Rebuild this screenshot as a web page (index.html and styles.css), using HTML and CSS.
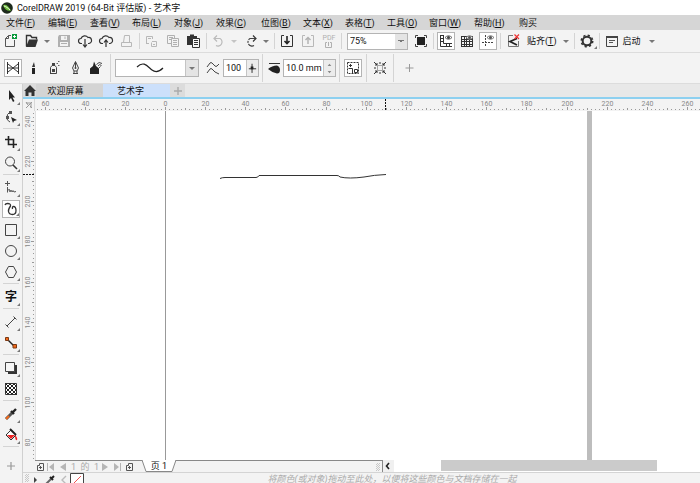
FILE: index.html
```html
<!DOCTYPE html>
<html lang="zh-CN">

<head>
    <meta charset="UTF-8">
    <meta name="viewport" content="width=device-width, initial-scale=1.0">
    <title>CorelDRAW 2019 (64-Bit 评估版) - 艺术字</title>
    <link rel="stylesheet" href="styles.css">
</head>

<body>
    <header class="titlebar">
        <svg class="logo" viewBox="0 0 12 12">
            <circle cx="6" cy="6" r="5.8" fill="#1d2a1c" />
            <path d="M2 3.5C4 1.5 7 3 10 8.5C7 9.5 4 8 2 3.5Z" fill="#6fbf3c" />
            <path d="M3 4C5 4.5 7 6 9 8" stroke="#e8f6df" fill="none" />
        </svg>
        <span>CorelDRAW 2019 (64-Bit 评估版) - 艺术字</span>
    </header>

    <nav class="menubar">
        <a href="#">文件(<u>F</u>)</a>
        <a href="#">编辑(<u>E</u>)</a>
        <a href="#">查看(<u>V</u>)</a>
        <a href="#">布局(<u>L</u>)</a>
        <a href="#">对象(<u>J</u>)</a>
        <a href="#" class="wide">效果(<u>C</u>)</a>
        <a href="#">位图(<u>B</u>)</a>
        <a href="#">文本(<u>X</u>)</a>
        <a href="#">表格(<u>T</u>)</a>
        <a href="#">工具(<u>O</u>)</a>
        <a href="#" class="wide">窗口(<u>W</u>)</a>
        <a href="#" class="wide">帮助(<u>H</u>)</a>
        <a href="#">购买</a>
    </nav>

    <!-- standard toolbar -->
    <div class="toolbar">
        <button class="tool" aria-label="新建"><svg viewBox="0 0 16 16">
            <path d="M8 2.5H5.5L2.5 5.5V13.5H11.5V7" fill="none" stroke="#555" />
            <path d="M2.5 5.5H5.5V2.5" fill="none" stroke="#555" />
            <path d="M9 1H14V6H9Z" fill="#0a9a3c" />
            <path d="M11.5 2V5M10 3.5H13" stroke="#fff" />
        </svg></button>
        <button class="tool" aria-label="打开"><svg viewBox="0 0 16 16">
            <path d="M2.5 13.5V2.5H6.5L8 4.5H12.5V6.5" fill="none" stroke="#333" stroke-width="1.4" />
            <path d="M2 14L5 6.5H14L11.5 14Z" fill="#333" />
        </svg></button>
        <button class="drop" aria-label="最近的文件"></button>
        <button class="tool off" aria-label="保存"><svg viewBox="0 0 16 16">
            <path d="M3 2H14V14H2V4Z" fill="#b0b0b0" />
            <path d="M5 3H11V7H5ZM4 9H12V13H4Z" fill="#f3f3f3" />
            <path d="M9 3.5V6M5 10.5H11" stroke="#b0b0b0" />
        </svg></button>
        <button class="tool" aria-label="从云端打开"><svg viewBox="0 0 16 16">
            <path d="M5 10.5H4A2.5 2.5 0 0 1 4 5.5A4 4 0 0 1 11 4.5A3 3 0 0 1 12 10.5H11" fill="none" stroke="#333" stroke-width="1.2" />
            <path d="M8 6V13M6 11.5L8 14L10 11.5" fill="none" stroke="#333" stroke-width="1.2" />
        </svg></button>
        <button class="tool" aria-label="保存到云端"><svg viewBox="0 0 16 16">
            <path d="M5 10.5H4A2.5 2.5 0 0 1 4 5.5A4 4 0 0 1 11 4.5A3 3 0 0 1 12 10.5H11" fill="none" stroke="#333" stroke-width="1.2" />
            <path d="M8 14V7M6 9.5L8 7L10 9.5" fill="none" stroke="#333" stroke-width="1.2" />
        </svg></button>
        <button class="tool" aria-label="打印"><svg viewBox="0 0 16 16">
            <path d="M4.5 9.5L5.5 2.5H10.5V9.5M2.5 9.5H12.5V13.5H2.5Z" fill="none" stroke="#b8b8b8" />
        </svg></button>
        <span class="sep"></span>
        <button class="tool" aria-label="剪切"><svg viewBox="0 0 16 16">
            <path d="M2.5 11V3.5H8.5V6M2.5 10.5H5M7.5 9.5V13.5H12.5V8.5H8" fill="none" stroke="#b8b8b8" />
            <path d="M4 5.5H7M9 11.5H11" stroke="#b8b8b8" />
        </svg></button>
        <button class="tool" aria-label="复制"><svg viewBox="0 0 16 16">
            <path d="M6 10.5H2.5V2.5H9.5V5M6.5 5.5H13.5V13.5H6.5Z" fill="none" stroke="#b0b0b0" />
            <path d="M4 4.5H8M4 6.5H6M8 7.5H12M8 9.5H12M8 11.5H12" stroke="#b0b0b0" />
        </svg></button>
        <button class="tool" aria-label="粘贴"><svg viewBox="0 0 16 16">
            <path d="M1 3H4V1.5H8V3H11V12H1Z" fill="#333" />
            <path d="M6.5 5.5H13.5V14.5H6.5Z" fill="#f8f8f8" stroke="#333" />
            <path d="M8 7.5H12M8 9.5H12M8 11.5H12" stroke="#333" />
        </svg></button>
        <span class="sep"></span>
        <button class="tool" aria-label="撤消"><svg viewBox="0 0 16 16">
            <path d="M3 5.5H9A4 4 0 1 1 5 12.5" fill="none" stroke="#bbb" stroke-width="1.2" />
            <path d="M6 2.5L3 5.5L6 8.5" fill="none" stroke="#bbb" stroke-width="1.2" />
        </svg></button>
        <button class="drop off" aria-label="撤消列表"></button>
        <button class="tool" aria-label="重做"><svg viewBox="0 0 16 16">
            <path d="M13 5.5H7A4 4 0 1 0 11 12.5" fill="none" stroke="#444" stroke-width="1.2" stroke-dasharray="8 1 2 1" />
            <path d="M10 2.5L13 5.5L10 8.5" fill="none" stroke="#333" stroke-width="1.2" />
        </svg></button>
        <button class="drop" aria-label="重做列表"></button>
        <span class="sep"></span>
        <button class="tool" aria-label="导入"><svg viewBox="0 0 16 16">
            <path d="M5 2.5H2.5V13.5H13.5V2.5H11" fill="none" stroke="#333" />
            <path d="M8 3V10M5.5 8L8 10.5L10.5 8" fill="none" stroke="#222" stroke-width="1.6" />
        </svg></button>
        <button class="tool" aria-label="导出"><svg viewBox="0 0 16 16">
            <path d="M5 2.5H2.5V13.5H13.5V2.5H11" fill="none" stroke="#b8b8b8" />
            <path d="M8 11V5M5.5 7L8 4.5L10.5 7" fill="none" stroke="#b0b0b0" stroke-width="1.4" />
        </svg></button>
        <button class="tool pdf" aria-label="发布为 PDF"><span>PDF</span><svg viewBox="0 0 8 6">
            <path d="M2 .5H.5V5.5H6.5V.5H5M3.5 0V4" fill="none" stroke="#b0b0b0" />
        </svg></button>
        <span class="sep"></span>
        <select class="zoom" aria-label="缩放级别">
            <option>75%</option>
            <option>100%</option>
            <option>200%</option>
        </select>
        <button class="tool" aria-label="全屏预览"><svg viewBox="0 0 16 16">
            <path d="M4 4H12V12H4Z" fill="#222" />
            <path d="M2.5 5V2.5H5M11 2.5H13.5V5M13.5 11V13.5H11M5 13.5H2.5V11" fill="none" stroke="#444" />
        </svg></button>
        <span class="sep"></span>
        <button class="tool toggled" aria-label="显示标尺"><svg viewBox="0 0 16 16">
            <path d="M2.5 2V13.5H14M5.5 2V10.5H14M2.5 2.5H5.5M3 5.5H5M3 8.5H5M8.5 11V13M11.5 11V13" fill="none" stroke="#333" />
            <path d="M7 4.5Q10.5 1 14 4.5Q10.5 8 7 4.5Z" fill="none" stroke="#666" />
            <circle cx="10.5" cy="4.5" r="1.5" fill="#444" />
        </svg></button>
        <button class="tool" aria-label="显示网格"><svg viewBox="0 0 16 16">
            <path d="M2 3.5H14M2 6.5H14M2 8.5H14M2 11.5H14M2 13.5H14M2.5 3V14M5.5 3V14M7.5 3V14M10.5 3V14M13.5 3V14" stroke="#333" />
            <path d="M7 4.5Q10.5 1 14 4.5Q10.5 8 7 4.5Z" fill="#eee" stroke="#777" />
            <circle cx="10.5" cy="4.5" r="1.5" fill="#555" />
        </svg></button>
        <button class="tool toggled" aria-label="显示辅助线"><svg viewBox="0 0 16 16">
            <path d="M5.5 2V14" stroke="#444" stroke-dasharray="2 1" />
            <path d="M2 9.5H14" stroke="#444" stroke-dasharray="2 1" />
            <path d="M7 4.5Q10.5 1 14 4.5Q10.5 8 7 4.5Z" fill="none" stroke="#777" />
            <circle cx="10.5" cy="4.5" r="1.5" fill="#555" />
        </svg></button>
        <span class="sep"></span>
        <button class="tool" aria-label="关闭贴齐"><svg viewBox="0 0 16 16">
            <path d="M8 2.5H3.5V13.5H13.5V8" fill="none" stroke="#777" />
            <path d="M12 5.5L5 8.5L12 12" fill="none" stroke="#222" stroke-width="1.8" />
            <path d="M9.5 1.5L14 6M14 1.5L9.5 6" stroke="#e33" stroke-width="1.2" />
        </svg></button>
        <button class="text-button snap">贴齐(<u>T</u>)</button>
        <button class="drop" aria-label="贴齐选项"></button>
        <span class="sep"></span>
        <button class="tool fly" aria-label="选项"><svg viewBox="0 0 16 16">
            <circle cx="8" cy="8" r="4.3" fill="none" stroke="#333" stroke-width="2" />
            <circle cx="8" cy="8" r="5.7" fill="none" stroke="#333" stroke-width="1.6" stroke-dasharray="2.2 2.277" />
        </svg></button>
        <span class="sep"></span>
        <button class="tool" aria-label="应用程序启动器"><svg viewBox="0 0 16 16">
            <path d="M2.5 3.5H13.5V13.5H2.5Z" fill="none" stroke="#444" />
            <path d="M2 3H14V5H2Z" fill="#444" />
            <path d="M5 7.5H11M5 9.5H9" stroke="#555" />
        </svg></button>
        <button class="text-button">启动</button>
        <button class="drop launch" aria-label="启动选项"></button>
    </div>

    <!-- property bar -->
    <div class="propbar">
        <button class="tool toggled" aria-label="预设"><svg viewBox="0 0 16 16">
            <path d="M2.5 2V14M13.5 2V14M3 4L13 12M3 12L13 4M3 8H13" fill="none" stroke="#333" />
        </svg></button>
        <button class="tool" aria-label="笔刷"><svg viewBox="0 0 16 16">
            <path d="M6 8H9V14H6Z" fill="#222" />
            <path d="M6 7L8 2L9 7Z" fill="#333" />
        </svg></button>
        <button class="tool" aria-label="喷涂"><svg viewBox="0 0 16 16">
            <path d="M3.5 14V7.5L5 5.5H8L9.500 7.5V13.5H3.5" fill="none" stroke="#444" />
            <path d="M5 3H8V5H5ZM5 9H8V12H5Z" fill="#444" />
            <path d="M9.5 3.5H11M11 1.5H12.5M11 5.5H12.5" stroke="#666" />
        </svg></button>
        <button class="tool" aria-label="书法"><svg viewBox="0 0 16 16">
            <path d="M7.5 1.5L4.500 8L6 11H9L10.500 8ZM7.5 2V8M5 13.5H10M6 11V13M9 11V13" fill="none" stroke="#444" />
            <circle cx="7.5" cy="8" r="1" fill="#444" />
        </svg></button>
        <button class="tool" aria-label="表达式"><svg viewBox="0 0 16 16">
            <path d="M1 14V8.5L4 6L5 1.5L7 6L10 8.5V14Z" fill="#222" />
            <path d="M7.500 4.5Q10 1 13 3.500M9 6Q10.500 3.500 12.500 5.500M10 8L11.500 6.500" fill="none" stroke="#444" />
        </svg></button>
        <span class="sep"></span>
        <div class="combo">
            <svg class="wave" viewBox="0 0 32 12">
                <path d="M3 5C10-2 14 5 18 8S26 9 29 6" fill="none" stroke="#222" stroke-width="1.2" />
            </svg>
            <button class="drop" aria-label="预设笔触"></button>
        </div>
        <label class="tool smooth" for="smooth" aria-label="手绘平滑"><svg viewBox="0 0 16 16">
            <path d="M2 7L5 3Q6 2 7 3L10 6Q11 7 12 6L14 4M2 13L5 9Q6 8 7 9L10 12L14 14" fill="none" stroke="#444" />
        </svg></label>
        <div class="field">
            <input id="smooth" class="short" type="text" value="100">
            <button class="slider" aria-label="滑块"><svg viewBox="0 0 12 16">
                <path d="M5.5 3V13M2 8.5H10" stroke="#222" />
                <path d="M4 6H7V9H4Z" fill="#222" />
            </svg></button>
        </div>
        <span class="sep"></span>
        <label class="tool nib" for="width" aria-label="笔触宽度"><svg viewBox="0 0 16 16">
            <path d="M3 3.5H14" stroke="#333" />
            <path d="M2 9Q6 5.5 11 5.5Q14 6.5 14 10Q14 13.5 11 13.5Q6 12.5 2 9Z" fill="#222" />
        </svg></label>
        <div class="field">
            <input id="width" class="long" type="text" value="10.0 mm">
            <button class="spin" aria-label="调整宽度"><svg viewBox="0 0 12 16">
                <path d="M4 5.5L6 3L8 5.5ZM4 11L6 13.5L8 11Z" fill="#888" />
            </svg></button>
        </div>
        <span class="sep"></span>
        <button class="tool toggled" aria-label="随对象一起缩放笔触"><svg viewBox="0 0 16 16">
            <path d="M2.5 2.5H13.5V13.5H2.5Z" fill="none" stroke="#333" stroke-dasharray="2 1" />
            <path d="M3.5 8.5H7.5V13M9.5 9.5H12.5V12.5H9.5ZM4 5.5H7M5.5 4V7" fill="none" stroke="#333" />
        </svg></button>
        <span class="sep"></span>
        <button class="tool" aria-label="边框"><svg viewBox="0 0 16 16">
            <path d="M5.5 5.5H10.5V10.5H5.5Z" fill="none" stroke="#555" stroke-dasharray="1 1" />
            <path d="M2 2L5 5M14 2L11 5M2 14L5 11M14 14L11 11M8 2V4M8 12V14M2 8H4M12 8H14M3 5H5V3M11 3V5H13M3 11H5V13M11 13V11H13" fill="none" stroke="#333" />
        </svg></button>
        <span class="sep"></span>
        <button class="tool add" aria-label="快速自定义"><svg viewBox="0 0 16 16">
            <path d="M7.5 4V12M3.5 8H11.5" stroke="#999" />
        </svg></button>
    </div>

    <div class="main">
        <aside class="toolbox">
            <button class="tool fly" aria-label="选择"><svg viewBox="0 0 16 16">
                <path d="M6 2V12L8 10L10 14L11.5 13L9.5 9.5H12Z" fill="#222" />
            </svg></button>
            <button class="tool fly" aria-label="形状"><svg viewBox="0 0 16 16">
                <path d="M8 2Q3 5 4 10Q5 12 7 13" fill="none" stroke="#444" />
                <path d="M6 2H9V5H6ZM3 7H6V10H3Z" fill="#555" />
                <path d="M8 8L14 11L11 12L10 14Z" fill="#222" />
            </svg></button>
            <hr>
            <button class="tool fly" aria-label="裁剪"><svg viewBox="0 0 16 16">
                <path d="M5.5 2V10.5H14M2 5.5H10.5V14" fill="none" stroke="#222" stroke-width="1.6" />
            </svg></button>
            <button class="tool fly" aria-label="缩放"><svg viewBox="0 0 16 16">
                <circle cx="7" cy="6.5" r="4.5" fill="none" stroke="#444" />
                <path d="M10 10L14 14" stroke="#333" stroke-width="1.6" />
            </svg></button>
            <hr>
            <button class="tool fly" aria-label="手绘"><svg viewBox="0 0 16 16">
                <path d="M4.5 1V6M2 3.5H7M4.5 7V12.5M5 10Q7 8 7 12Q8 8 9 12Q10 9 11 12L13 11.5" fill="none" stroke="#555" />
            </svg></button>
            <button class="tool fly toggled" aria-label="艺术笔"><svg viewBox="0 0 16 16">
                <path d="M2 4Q2.500 2.500 4.500 2.500Q8 2.500 7.500 5Q5 8.500 5.500 10.500Q6 13.500 9.500 13.500Q13 13.500 13 9.500Q13 5.500 10.500 5.500Q9 5.500 9.500 8" fill="none" stroke="#333" stroke-width="1.3" />
            </svg></button>
            <button class="tool fly" aria-label="矩形"><svg viewBox="0 0 16 16">
                <path d="M2.5 2.5H13.5V13.5H2.5Z" fill="none" stroke="#444" />
            </svg></button>
            <button class="tool fly" aria-label="椭圆形"><svg viewBox="0 0 16 16">
                <circle cx="8" cy="8" r="5.5" fill="none" stroke="#444" />
            </svg></button>
            <button class="tool fly" aria-label="多边形"><svg viewBox="0 0 16 16">
                <path d="M5.5 2.5H10.5L13.5 8L10.5 13.5H5.5L2.5 8Z" fill="none" stroke="#444" />
            </svg></button>
            <hr>
            <button class="tool fly glyph">字</button>
            <hr>
            <button class="tool fly" aria-label="平行度量"><svg viewBox="0 0 16 16">
                <path d="M4 12L12 4M2.5 10.5L5.5 13.5M10.5 2.5L13.5 5.5" stroke="#444" />
            </svg></button>
            <button class="tool fly" aria-label="连接器"><svg viewBox="0 0 16 16">
                <path d="M4 4L12 12" stroke="#222" stroke-width="1.4" />
                <path d="M2.5 2.5H5.5V5.5H2.5ZM10 9.5H13.5V13H10Z" fill="#f26a1b" stroke="#7a3a16" />
            </svg></button>
            <hr>
            <button class="tool fly" aria-label="阴影"><svg viewBox="0 0 16 16">
                <path d="M5 5H14V14H5Z" fill="#333" />
                <path d="M2.5 2.5H11.5V11.5H2.5Z" fill="#f6f6f6" stroke="#444" />
            </svg></button>
            <button class="tool" aria-label="透明度"><svg viewBox="0 0 16 16">
                <path d="M2 2H14V14H2Z" fill="#fff" />
                <path d="M2 3H14M2 7H14M2 11H14" stroke="#222" stroke-width="2" stroke-dasharray="2 2" />
                <path d="M4 5H14M4 9H14M4 13H14" stroke="#222" stroke-width="2" stroke-dasharray="2 2" />
                <path d="M2.5 2.5H13.5V13.5H2.5Z" fill="none" stroke="#333" />
            </svg></button>
            <hr>
            <button class="tool fly" aria-label="颜色滴管"><svg viewBox="0 0 16 16">
                <path d="M3 13L9 7" stroke="#555" stroke-width="3" />
                <path d="M3 13L6 10" stroke="#f26a1b" stroke-width="2" />
                <path d="M8 5L11 8M9 7L13 3" stroke="#222" stroke-width="2.4" />
            </svg></button>
            <button class="tool fly" aria-label="交互式填充"><svg viewBox="0 0 16 16">
                <path d="M3 8L8 3L13 8L8 13Z" fill="#fff" stroke="#333" />
                <path d="M7 2L13 8" stroke="#222" stroke-width="2" />
                <path d="M4 8H12L8 12ZM12 8Q15 11 14 13Q12 14 12 8Z" fill="#e22" />
            </svg></button>
            <hr>
            <button class="tool add" aria-label="快速自定义"><svg viewBox="0 0 16 16">
                <path d="M8 4V12M4 8H12" stroke="#999" stroke-width="1.2" />
            </svg></button>
        </aside>

        <div class="workspace">
            <div class="tabs">
                <button class="home" aria-label="主页"><svg viewBox="0 0 12 12">
                    <path d="M6 0L12 6H10.5V11H7.5V7.5H4.5V11H1.5V6H0Z" fill="#333" />
                </svg></button>
                <button class="tab">欢迎屏幕</button>
                <button class="tab active">艺术字</button>
                <button class="newtab" aria-label="新建文档"><svg viewBox="0 0 12 12">
                    <path d="M6 2V10M2 6H10" stroke="#aaa" stroke-width="1.4" />
                </svg></button>
            </div>
            <div class="ruler-row">
                <div class="corner"><svg viewBox="0 0 12 12">
                    <path d="M3 9L9 3M3 4H8M8 4V9M3 3L5 6M9 9L7 7" fill="none" stroke="#999" />
                </svg></div>
                <svg class="ruler-h" id="rulerH"></svg>
            </div>
            <div class="view">
                <svg class="ruler-v" id="rulerV"></svg>
                <div class="canvas">
                    <div class="page">
                        <svg class="stroke" viewBox="0 0 168 8">
                            <path d="M1 5.5Q3 4.5 6 4.5H37Q39 4.5 40 2.5H118Q120 2.5 121 4Q130 6 145 4Q155 2 167 1.5" fill="none" stroke="#333" />
                        </svg>
                    </div>
                </div>
            </div>
            <div class="bottom">
                <div class="pager">
                    <button class="add-page" aria-label="在前面添加页"><svg viewBox="0 0 7 8"><path d="M2.500 .5H6.500V7.500H.5V2.500H2.500ZM3.500 3V6M2 4.500H5" fill="none" stroke="#555" /></svg></button>
                    <button aria-label="第一页"><svg viewBox="0 0 10 10"><path d="M1 1H2V9H1ZM8 1V9L3 5Z" fill="#b5b5b5" /></svg></button>
                    <button aria-label="上一页"><svg viewBox="0 0 10 10"><path d="M8 1V9L2 5Z" fill="#b5b5b5" /></svg></button>
                    <span class="count">1&nbsp; 的 &nbsp;1</span>
                    <button aria-label="下一页"><svg viewBox="0 0 10 10"><path d="M2 1V9L8 5Z" fill="#b5b5b5" /></svg></button>
                    <button aria-label="最后一页"><svg viewBox="0 0 10 10"><path d="M2 1V9L7 5ZM8 1H9V9H8Z" fill="#b5b5b5" /></svg></button>
                    <button class="add-page" aria-label="在后面添加页"><svg viewBox="0 0 7 8"><path d="M2.500 .5H6.500V7.500H.5V2.500H2.500ZM3.500 3V6M2 4.500H5" fill="none" stroke="#555" /></svg></button>
                    <button class="page-tab">
                        <svg viewBox="0 0 34 12">
                            <path d="M0 0L4 11.5H30L34 0" fill="#fff" stroke="#888" />
                        </svg>
                        <span>页 1</span>
                    </button>
                    <span class="grip"></span>
                </div>
                <div class="scroll">
                    <button aria-label="向左滚动"><svg viewBox="0 0 10 10"><path d="M6 2L3.5 5L6 8" fill="none" stroke="#222" stroke-width="1.6" /></svg></button>
                    <div class="thumb"></div>
                </div>
            </div>
            <footer class="palette">
                <span class="grip"></span>
                <button aria-label="调色板菜单"><svg viewBox="0 0 14 14"><path d="M5 4L8 7L5 10Z" fill="#444" /></svg></button>
                <button aria-label="滴管"><svg viewBox="0 0 14 14"><path d="M3 11L8 6" stroke="#666" stroke-width="2" /><path d="M7 4L10 7M8 6L11 3" stroke="#222" stroke-width="2" /></svg></button>
                <button aria-label="向左"><svg viewBox="0 0 14 14"><path d="M9 3L5 7L9 11" fill="none" stroke="#bbb" stroke-width="1.4" /></svg></button>
                <button class="swatch" aria-label="无颜色"><svg viewBox="0 0 14 14"><path d="M.5 .5H13.5V13.5H.5Z" fill="#fff" stroke="#444" /><path d="M3 11L11 3" stroke="#e55" /></svg></button>
                <span class="hint">将颜色(或对象)拖动至此处，以便将这些颜色与文档存储在一起</span>
            </footer>
        </div>
    </div>

    <script src="script.js"></script>
</body>

</html>
```

FILE: styles.css
```css
* {
    box-sizing: border-box;
}

html,
body {
    margin: 0;
    padding: 0;
}

body {
    display: flex;
    flex-direction: column;
    height: 100vh;
    overflow: hidden;
    background: #f3f3f3;
    color: #111;
    font: 9px/12px Roboto, "Noto Sans CJK SC", sans-serif;
}

button,
input,
select {
    margin: 0;
    padding: 0;
    border: 0;
    background: none;
    color: inherit;
    font: inherit;
}

svg {
    display: block;
}

.titlebar {
    display: flex;
    align-items: center;
    gap: 4px;
    height: 15px;
    padding-left: 1px;
    background: #fff;
    white-space: nowrap;
}

.logo {
    width: 12px;
    height: 12px;
}

.menubar {
    display: flex;
    align-items: center;
    height: 15px;
    padding-left: 6px;
    background: #d6d6d6;
}

.menubar a {
    width: 42px;
    color: inherit;
    text-decoration: none;
    white-space: nowrap;
}

.menubar .wide {
    width: 45px;
}

/* toolbars */
.toolbar,
.propbar {
    display: flex;
    align-items: center;
    gap: 1px;
    flex: none;
    padding-left: 1px;
    border-bottom: 1px solid #dcdcdc;
}

.toolbar {
    height: 23px;
}

.propbar {
    height: 31px;
    padding-left: 3px;
}

.tool {
    position: relative;
    display: flex;
    align-items: center;
    justify-content: center;
    flex: none;
    width: 20px;
    height: 18px;
}

.tool svg {
    flex: none;
    width: 16px;
    height: 16px;
}

.toggled {
    width: 18px;
    margin: 0 1px;
    border: 1px solid #b4b4b4;
    background: #fff;
}

.fly::after {
    content: "";
    position: absolute;
    right: 0;
    bottom: 1px;
    border-left: 3px solid transparent;
    border-bottom: 3px solid #777;
}

.drop {
    flex: none;
    width: 8px;
    height: 16px;
    margin-right: 2px;
}

.drop::before {
    content: "";
    display: block;
    margin: 0 auto;
    width: 0;
    border: 3px solid transparent;
    border-top-color: #777;
    border-bottom: 0;
}

.drop.off::before {
    border-top-color: #c4c4c4;
}

.sep {
    flex: none;
    width: 1px;
    height: 16px;
    margin: 0 1px;
    background: #d4d4d4;
}

.propbar .sep {
    height: 28px;
    margin: 0 2px;
}

.tool.pdf {
    flex-direction: column;
    color: #b0b0b0;
    font-size: 7px;
    line-height: 7px;
}

.pdf svg {
    width: 8px;
    height: 6px;
}

.zoom {
    width: 61px;
    height: 17px;
    margin: 0 2px 0 3px;
    padding-left: 2px;
    border: 1px solid #b4b4b4;
    appearance: none;
    background:
        linear-gradient(to bottom left, #777 50%, transparent 50%) 50px 6px / 3px 3px no-repeat,
        linear-gradient(to bottom right, #777 50%, transparent 50%) 53px 6px / 3px 3px no-repeat,
        linear-gradient(#e4e4e4, #e4e4e4) right / 12px 100% no-repeat,
        #fff;
}

.text-button {
    white-space: nowrap;
}

.snap {
    margin: 0 4px 0 3px;
}

.launch {
    margin-left: 6px;
}

.combo,
.field {
    display: flex;
    align-items: center;
    flex: none;
    height: 18px;
    border: 1px solid #b4b4b4;
    background: #fff;
}

.combo {
    width: 84px;
    margin-left: 1px;
    justify-content: space-between;
}

.combo .wave {
    width: 32px;
    height: 12px;
    margin-left: 18px;
}

.combo .drop {
    width: 13px;
    margin: 0;
    border-left: 1px solid #c4c4c4;
    background: #e4e4e4;
}

.smooth {
    width: 18px;
    margin-left: 4px;
}

.nib {
    width: 16px;
}

.field input {
    height: 16px;
    padding-left: 2px;
}

.field .short {
    width: 22px;
}

.field .long {
    width: 39px;
}

.slider,
.spin {
    width: 12px;
    height: 16px;
    border-left: 1px solid #c4c4c4;
    background: #ececec;
}

.propbar .add {
    margin-left: 3px;
}

/* toolbox */
.main {
    display: flex;
    flex: 1;
    min-height: 0;
}

.toolbox {
    display: flex;
    flex-direction: column;
    align-items: center;
    flex: none;
    width: 23px;
    padding-top: 1px;
    border-right: 1px solid #d0d0d0;
    background: #f3f3f3;
}

.toolbox .tool {
    width: 18px;
    height: 21px;
}

.toolbox .toggled {
    height: 18px;
    margin: 2px 0 1px;
}

.toolbox hr {
    flex: none;
    width: 16px;
    height: 1px;
    margin: 1px 0 2px;
    border: 0;
    background: #d4d4d4;
}

.toolbox .add {
    margin-top: 6px;
}

.glyph {
    font-size: 12px;
    font-weight: bold;
}

/* document area */
.workspace {
    display: flex;
    flex-direction: column;
    flex: 1;
    min-width: 0;
}

.tabs {
    display: flex;
    height: 15px;
    border-bottom: 2px solid #8dd0f0;
    background: #e8e8e8;
}

.home,
.newtab {
    display: flex;
    align-items: center;
    justify-content: center;
    width: 13px;
    background: #dcdcdc;
}

.newtab {
    width: 15px;
}

.home svg,
.newtab svg {
    width: 12px;
    height: 12px;
}

.tab {
    width: 67px;
    padding-right: 8px;
    background: #d4d4d4;
    line-height: 12px;
}

.tab.active {
    padding-right: 12px;
    background: #cce0fb;
}

.ruler-row {
    display: flex;
    height: 12px;
}

.corner {
    width: 12px;
    border-right: 1px solid #d8d8d8;
}

.corner svg {
    width: 12px;
    height: 12px;
}

.ruler-h {
    flex: 1;
    height: 12px;
}

.view {
    display: flex;
    flex: 1;
    min-height: 0;
}

.ruler-v {
    width: 12px;
    height: 100%;
    flex: none;
}

.ruler-h text,
.ruler-v text {
    fill: #888;
    font-size: 7px;
    text-anchor: middle;
}

.canvas {
    position: relative;
    flex: 1;
    overflow: hidden;
    border-left: 1px solid #e0e0e0;
    background: #fff;
}

/* the drawing page lies on the free desktop */
.page {
    position: absolute;
    top: 0;
    bottom: 0;
    left: 129px;
    width: 427px;
    border-left: 1px solid #999;
    border-right: 5px solid #bdbdbd;
}

.stroke {
    position: absolute;
    top: 62px;
    left: 53px;
    width: 168px;
    height: 8px;
}

/* page navigator and scrollbar */
.bottom {
    display: flex;
    height: 12px;
    padding-left: 12px;
}

.pager {
    display: flex;
    align-items: center;
    flex: none;
    width: 348px;
    border-top: 1px solid #888;
    border-right: 1px solid #888;
    color: #aaa;
}

.pager button {
    flex: none;
    width: 12px;
    height: 10px;
}

.pager button svg {
    width: 10px;
    height: 10px;
}

.pager .add-page {
    width: 7px;
    height: 8px;
    margin: 0 2px;
}

.pager .add-page svg {
    width: 7px;
    height: 8px;
}

.count {
    width: 30px;
    text-align: center;
    white-space: nowrap;
}

.pager .page-tab {
    position: relative;
    width: 34px;
    height: 12px;
    margin: -1px 0 0 7px;
    color: #111;
    line-height: 11px;
}

.pager .page-tab svg {
    position: absolute;
    top: 0;
    left: 0;
    width: 34px;
    height: 12px;
}

.page-tab span {
    position: relative;
}

.grip {
    width: 4px;
    height: 8px;
    margin-left: auto;
    background: repeating-conic-gradient(#c8c8c8 0 25%, transparent 0 50%) 0 0 / 2px 2px;
}

.pager .grip {
    margin-right: 2px;
}

.scroll {
    display: flex;
    flex: 1;
    background: #fff;
}

.scroll button {
    width: 11px;
    background: #f0f0f0;
}

.scroll svg {
    width: 10px;
    height: 10px;
}

.thumb {
    width: 68%;
    height: 11px;
    margin-left: 47px;
    background: #cbcbcb;
}

.palette {
    display: flex;
    align-items: flex-start;
    flex: none;
    height: 11px;
    overflow: hidden;
    border-top: 1px solid #d4d4d4;
}

.palette .grip {
    flex: none;
    margin: 1px 0 0 2px;
}

.palette button {
    flex: none;
    width: 14px;
    height: 14px;
}

.palette .swatch {
    margin-left: -1px;
}

.hint {
    flex: 1;
    color: #aaa;
    font-style: italic;
    text-align: center;
    white-space: nowrap;
}
```

FILE: script.js
```js
// 20 mm take 40.15 px at this zoom level
const STEP = 40.15;
const NS = "http://www.w3.org/2000/svg";

function line(svg, x1, y1, x2, y2, color, dash) {
    const el = document.createElementNS(NS, "path");
    el.setAttribute("d", `M${x1} ${y1}L${x2} ${y2}`);
    el.setAttribute("stroke", color);
    if (dash) el.setAttribute("stroke-dasharray", dash);
    svg.appendChild(el);
}

function label(svg, text, x, y, turn) {
    const el = document.createElementNS(NS, "text");
    el.textContent = text;
    el.setAttribute("x", x);
    el.setAttribute("y", y);
    if (turn) el.setAttribute("transform", `rotate(-90 ${x} ${y})`);
    svg.appendChild(el);
}

function drawHorizontal() {
    const svg = document.getElementById("rulerH");
    const zero = 130;
    for (let i = -32; zero + i * STEP / 10 < svg.clientWidth; i++) {
        const x = Math.round(zero + i * STEP / 10) + 0.5;
        line(svg, x, i % 10 == 0 ? 8 : i % 5 == 0 ? 9 : 10, x, 11, "#999");
        if (i % 10 == 0) label(svg, Math.abs(i * 2), x, 7);
    }
    line(svg, 350.5, 0, 350.5, 12, "#111", "2 1");
}

function drawVertical() {
    const svg = document.getElementById("rulerV");
    const top = 10;
    for (let i = -2; top + i * STEP / 10 < svg.clientHeight; i++) {
        const y = Math.round(top + i * STEP / 10) + 0.5;
        line(svg, i % 10 == 0 ? 8 : i % 5 == 0 ? 9 : 10, y, 11, y, "#999");
        if (i % 10 == 0) label(svg, 240 - i * 2, 7, y, true);
    }
    line(svg, 0, 63.5, 12, 63.5, "#111", "2 1");
}

drawHorizontal();
drawVertical();
```
